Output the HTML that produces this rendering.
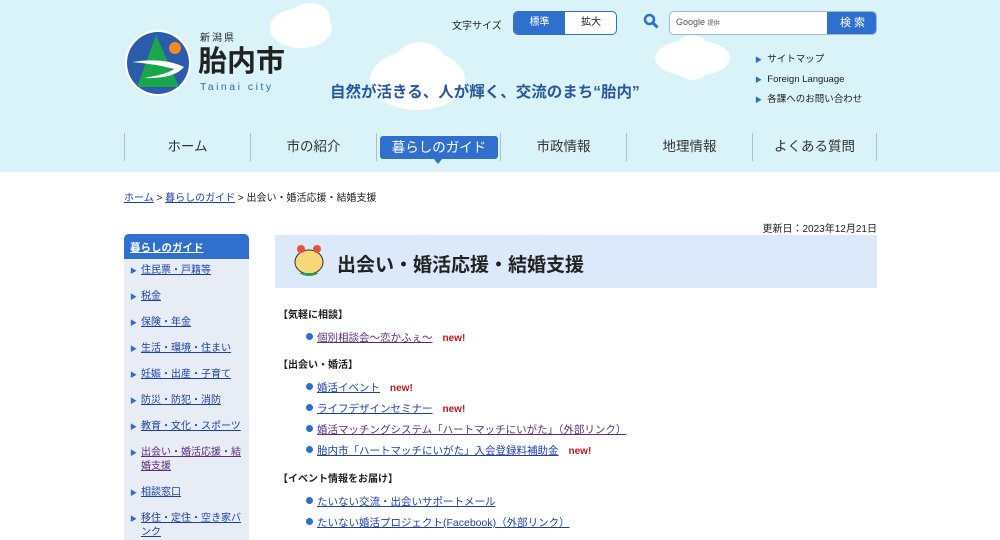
<!DOCTYPE html>
<html><head><meta charset="utf-8"><style>
*{margin:0;padding:0;box-sizing:border-box}
body{width:1000px;height:540px;overflow:hidden;background:#fff;font-family:"Liberation Sans","Noto Sans CJK JP",sans-serif;color:#222;position:relative}
.abs{position:absolute}
#hdr{position:absolute;left:0;top:0;width:1000px;height:172px;background:#daf3f8}
.cloud{position:absolute;background:#fff;border-radius:50%}
.nav{position:absolute;top:133px;height:28px;width:126px;border-left:1px solid #9fc3d9;font-size:13.5px;text-align:center;line-height:28px;color:#333}
a{color:#1a3fb0}
.sb{position:absolute;left:130px;font-size:10px;color:#1a3fb0;text-decoration:underline;padding-left:11px;width:118px;line-height:14px}
.sb:before{content:"▶";font-size:7px;color:#2a6fc9;position:absolute;left:0;top:1px}
.h{position:absolute;left:278px;font-size:10px;font-weight:bold}
.li{position:absolute;left:306px;font-size:10.5px}
.li:before{content:"";display:inline-block;width:7px;height:7px;border-radius:50%;background:#2a6fc9;margin-right:4px;vertical-align:1px}
.li a{color:#1a3fb0}
.new{color:#c0161c;font-weight:bold;margin-left:10px;font-size:10px}
</style></head><body>
<div id="hdr">
 <div class="cloud" style="left:270px;top:8px;width:62px;height:40px"></div>
 <div class="cloud" style="left:290px;top:3px;width:40px;height:30px"></div>
 <div class="cloud" style="left:370px;top:50px;width:95px;height:60px"></div>
 <div class="cloud" style="left:395px;top:42px;width:50px;height:40px"></div>
 <div class="cloud" style="left:655px;top:40px;width:75px;height:36px"></div>
 <div class="cloud" style="left:672px;top:35px;width:40px;height:45px"></div>
 <svg class="abs" style="left:124px;top:29px" width="68" height="68" viewBox="0 0 68 68">
  <circle cx="34" cy="34" r="33" fill="#fff"/><circle cx="34" cy="34" r="31" fill="#2b5bab"/>
  <polygon points="32,6 13,58 55,58" fill="#1aa64a"/>
  <circle cx="51" cy="19" r="6" fill="#f08a24"/>
  <path d="M8 33 Q40 28 60 38 Q50 50 20 49 Q44 45 50 40 Q32 35 8 33Z" fill="#fff"/>
 </svg>
 <div class="abs" style="left:200px;top:29px;font-size:10px;letter-spacing:2px">新潟県</div>
 <div class="abs" style="left:198px;top:46px;font-size:29px;font-weight:bold;line-height:32px">胎内市</div>
 <div class="abs" style="left:200px;top:81px;font-size:10.5px;color:#2c6ab2;letter-spacing:2.5px">Tainai city</div>
 <div class="abs" style="left:330px;top:80px;font-size:15.5px;font-weight:bold;color:#2a56a0">自然が活きる、人が輝く、交流のまち“胎内”</div>
 <div class="abs" style="left:452px;top:17px;font-size:10px">文字サイズ</div>
 <div class="abs" style="left:513px;top:11px;width:104px;height:24px;border:1px solid #2f6fce;border-radius:5px;background:#fff;overflow:hidden;font-size:10px;line-height:22px">
  <div class="abs" style="left:0;top:0;width:51px;height:22px;background:#2f6fce;color:#fff;text-align:center">標準</div>
  <div class="abs" style="left:51px;top:0;width:52px;text-align:center">拡大</div></div>
 <svg class="abs" style="left:643px;top:13px" width="16" height="16"><circle cx="6.5" cy="6.5" r="4.5" fill="none" stroke="#2f6fce" stroke-width="2.5"/><line x1="10" y1="10" x2="14.5" y2="14.5" stroke="#2f6fce" stroke-width="3"/></svg>
 <div class="abs" style="left:669px;top:11px;width:208px;height:24px;border:1px solid #9ab8d8;border-radius:5px;background:#fff;overflow:hidden">
  <span class="abs" style="left:6px;top:5px;font-size:9px;color:#555">Google <span style="font-size:6px">提供</span></span>
  <div class="abs" style="left:157px;top:0;width:51px;height:24px;background:#2f6fce;color:#fff;font-size:11px;text-align:center;line-height:23px">検 索</div></div>
 <div class="abs" style="left:755px;top:50px;font-size:9.5px;line-height:19px"><span style="color:#2a6fc9;font-size:7px">▶</span>&nbsp; サイトマップ<br><span style="color:#2a6fc9;font-size:7px">▶</span>&nbsp; Foreign Language<br><span style="color:#2a6fc9;font-size:7px">▶</span>&nbsp; 各課へのお問い合わせ</div>
 <div class="nav" style="left:124px">ホーム</div>
 <div class="nav" style="left:250px">市の紹介</div>
 <div class="nav" style="left:376px"><div style="position:absolute;left:3px;top:3px;width:118px;height:23px;background:#2f6fce;color:#fff;border-radius:3px;line-height:23px">暮らしのガイド</div><div style="position:absolute;left:57px;top:26px;border:4px solid transparent;border-top:5px solid #2f6fce"></div></div>
 <div class="nav" style="left:500px">市政情報</div>
 <div class="nav" style="left:626px">地理情報</div>
 <div class="nav" style="left:752px;width:125px;border-right:1px solid #9fc3d9">よくある質問</div>
</div>
<div class="abs" style="left:124px;top:189px;font-size:10px"><a href="#">ホーム</a> &gt; <a href="#">暮らしのガイド</a> &gt; 出会い・婚活応援・結婚支援</div>
<div class="abs" style="left:757px;top:220px;font-size:10px;width:120px;text-align:right">更新日：2023年12月21日</div>
<div class="abs" style="left:124px;top:234px;width:125px;height:306px;background:#e8ecf4"></div>
<div class="abs" style="left:124px;top:234px;width:125px;height:25px;background:#2f6fce;border-radius:5px 5px 0 0;color:#fff;font-size:10.5px;font-weight:bold;padding:6px 6px;text-decoration:underline">暮らしのガイド</div>
<div class="sb" style="top:264px">住民票・戸籍等</div>
<div class="sb" style="top:290px">税金</div>
<div class="sb" style="top:316px">保険・年金</div>
<div class="sb" style="top:342px">生活・環境・住まい</div>
<div class="sb" style="top:368px">妊娠・出産・子育て</div>
<div class="sb" style="top:394px">防災・防犯・消防</div>
<div class="sb" style="top:420px">教育・文化・スポーツ</div>
<div class="sb" style="top:446px;color:#5a2d82">出会い・婚活応援・結婚支援</div>
<div class="sb" style="top:486px">相談窓口</div>
<div class="sb" style="top:512px">移住・定住・空き家バンク</div>
<div class="abs" style="left:275px;top:235px;width:602px;height:53px;background:#dbe9fb"></div>
<svg class="abs" style="left:287px;top:241px" width="42" height="38"><ellipse cx="22" cy="21" rx="14" ry="12" fill="#f6d77a" stroke="#333"/><circle cx="14" cy="8" r="4" fill="#e5533d"/><circle cx="30" cy="8" r="4" fill="#e5533d"/><path d="M12 32 Q22 38 32 32" fill="#2c9e4a"/></svg>
<div class="abs" style="left:337px;top:250px;font-size:19px;font-weight:bold">出会い・婚活応援・結婚支援</div>
<div class="h" style="top:306px">【気軽に相談】</div>
<div class="li" style="top:330px"><a href="#" style="color:#5a2d82">個別相談会～恋かふぇ～</a><span class="new">new!</span></div>
<div class="h" style="top:356px">【出会い・婚活】</div>
<div class="li" style="top:380px"><a href="#">婚活イベント</a><span class="new">new!</span></div>
<div class="li" style="top:401px"><a href="#">ライフデザインセミナー</a><span class="new">new!</span></div>
<div class="li" style="top:422px"><a href="#" style="color:#5a2d82">婚活マッチングシステム「ハートマッチにいがた」（外部リンク）</a></div>
<div class="li" style="top:443px"><a href="#">胎内市「ハートマッチにいがた」入会登録料補助金</a><span class="new">new!</span></div>
<div class="h" style="top:470px">【イベント情報をお届け】</div>
<div class="li" style="top:494px"><a href="#">たいない交流・出会いサポートメール</a></div>
<div class="li" style="top:515px"><a href="#">たいない婚活プロジェクト(Facebook)（外部リンク）</a></div>
</body></html>
